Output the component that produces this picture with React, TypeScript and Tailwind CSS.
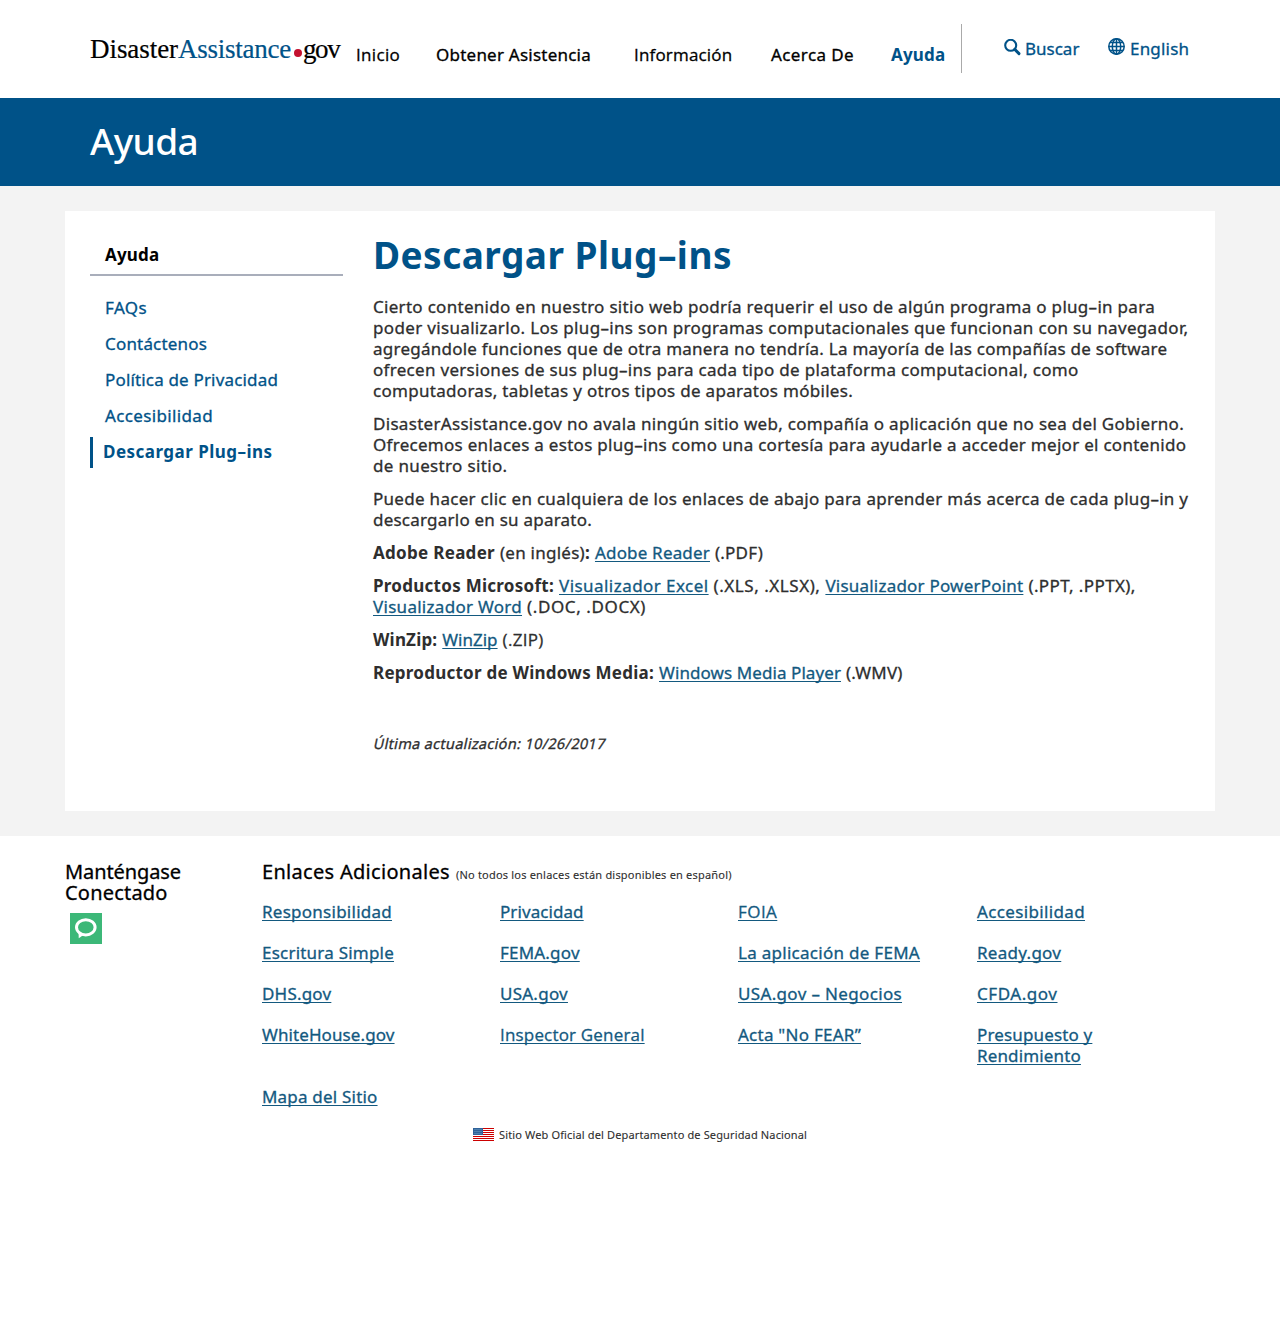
import React from 'react';

const nav = [
  { label: 'Inicio', cls: "w-[80px] font-['Open_Sans',sans-serif] tracking-[0.32px]" },
  { label: 'Obtener Asistencia', cls: 'w-[198px] tracking-[0.231px]' },
  { label: 'Información', cls: "w-[137px] font-['Open_Sans',sans-serif] tracking-[0.18px]" },
  { label: 'Acerca De', cls: 'w-[120px] tracking-[0.399px]' },
  { label: 'Ayuda', cls: 'w-[70px] font-bold tracking-[0.2px] text-[#005288] [-webkit-text-stroke:0]' },
];

const sideLinks = [
  { label: 'FAQs', cls: 'tracking-[0.394px]' },
  { label: 'Contáctenos', cls: 'tracking-[0.179px]' },
  { label: 'Política de Privacidad', cls: 'tracking-[0.168px]' },
  { label: 'Accesibilidad', cls: 'tracking-[0.357px]' },
];

const paragraphs = [
  [
    { text: 'Cierto contenido en nuestro sitio web podría requerir el uso de algún programa o plug–in para', cls: 'tracking-[0.297px]' },
    { text: 'poder visualizarlo. Los plug–ins son programas computacionales que funcionan con su navegador,', cls: 'tracking-[0.338px]' },
    { text: 'agregándole funciones que de otra manera no tendría. La mayoría de las compañías de software', cls: 'tracking-[0.247px]' },
    { text: 'ofrecen versiones de sus plug–ins para cada tipo de plataforma computacional, como', cls: 'tracking-[0.3px]' },
    { text: 'computadoras, tabletas y otros tipos de aparatos móbiles.', cls: 'tracking-[0.296px]' },
  ],
  [
    { text: 'DisasterAssistance.gov no avala ningún sitio web, compañía o aplicación que no sea del Gobierno.', cls: 'tracking-[0.303px]' },
    { text: 'Ofrecemos enlaces a estos plug–ins como una cortesía para ayudarle a acceder mejor el contenido', cls: 'tracking-[0.284px]' },
    { text: 'de nuestro sitio.', cls: 'tracking-[0.34px]' },
  ],
  [
    { text: 'Puede hacer clic en cualquiera de los enlaces de abajo para aprender más acerca de cada plug–in y', cls: 'tracking-[0.29px]' },
    { text: 'descargarlo en su aparato.', cls: 'tracking-[0.225px]' },
  ],
];

const footerLinks = [
  { label: 'Responsibilidad', cls: 'tracking-[0.257px]' },
  { label: 'Privacidad', cls: 'tracking-[0.08px]' },
  { label: 'FOIA', cls: "font-['Open_Sans',sans-serif] tracking-[0.45px]" },
  { label: 'Accesibilidad', cls: 'tracking-[0.357px]' },
  { label: 'Escritura Simple', cls: 'tracking-[0.22px]' },
  { label: 'FEMA.gov', cls: 'tracking-[0.2px]' },
  { label: 'La aplicación de FEMA', cls: 'tracking-[0.281px]' },
  { label: 'Ready.gov', cls: 'tracking-[0.28px]' },
  { label: 'DHS.gov', cls: 'tracking-[0.2px]' },
  { label: 'USA.gov', cls: 'tracking-[0.25px]' },
  { label: 'USA.gov – Negocios', cls: 'tracking-[0.346px]' },
  { label: 'CFDA.gov', cls: 'tracking-[0.55px]' },
  { label: 'WhiteHouse.gov', cls: 'tracking-[0.1px]' },
  { label: 'Inspector General', cls: "font-['Open_Sans',sans-serif] tracking-[0.18px]" },
  { label: 'Acta "No FEAR”', cls: 'tracking-[0.251px]' },
  { label: 'Presupuesto y Rendimiento', cls: 'tracking-[0.15px]' },
  { label: 'Mapa del Sitio', cls: 'tracking-[0.2px]' },
];

function A({ children, className = '' }: { children: React.ReactNode; className?: string }) {
  return (
    <a
      href="#"
      className={'text-[#13597f] underline decoration-1 underline-offset-[2px] [text-decoration-skip-ink:none] ' + className}
    >
      {children}
    </a>
  );
}

function B({ children, className = '' }: { children: React.ReactNode; className?: string }) {
  return <strong className={'font-bold [-webkit-text-stroke:0] ' + className}>{children}</strong>;
}

function SearchIcon() {
  return (
    <svg width="17" height="17" viewBox="0 0 17 17" fill="none" stroke="#005288">
      <circle cx="6.7" cy="6.3" r="5.5" strokeWidth="2.1" />
      <path d="M10.8 10.4L15 14.6" strokeWidth="2.9" strokeLinecap="round" />
    </svg>
  );
}

function GlobeIcon() {
  return (
    <svg width="17" height="17" viewBox="0 0 17 17" fill="none" stroke="#005288" strokeWidth="1.5">
      <circle cx="8.5" cy="8.5" r="7.7" />
      <ellipse cx="8.5" cy="8.5" rx="4.2" ry="7.7" />
      <path d="M8.5 0.7V16.3M0.7 8.5H16.3M2 4.6H15M2 12.4H15" />
    </svg>
  );
}

function ChatIcon() {
  return (
    <svg width="32" height="31" viewBox="0 0 32 31">
      <rect width="32" height="31" fill="#3cb878" />
      <path d="M8.4 18.5L8.8 25.3L14 21.5Z" fill="#fff" />
      <ellipse cx="15.8" cy="14.3" rx="9.3" ry="7.6" fill="#3cb878" stroke="#fff" strokeWidth="3" />
    </svg>
  );
}

function Flag() {
  return (
    <svg width="21" height="13" viewBox="0 0 21 13" shapeRendering="crispEdges">
      <rect width="21" height="13" fill="#ffffff" />
      {[0, 2, 4, 6, 8, 10, 12].map((y) => (
        <rect key={y} x="0" y={y} width="21" height="1" fill="#cc0000" />
      ))}
      <rect width="10" height="7" fill="#2f6299" />
      {[1, 3, 5].map((y) => (
        <rect key={y} x="1" y={y} width="8" height="1" fill="#4c7fae" />
      ))}
    </svg>
  );
}

export default function App() {
  return (
    <div className="min-h-[1329px] w-[1280px] bg-white font-['Noto_Sans',sans-serif] text-[17px] leading-[21px] whitespace-nowrap text-[#2e2e2e] [-webkit-text-stroke:0.3px]">
      <header className="flex h-[98px] pl-[90px]">
        <div className="flex w-[266px] pt-[33px] font-['Liberation_Serif',serif] text-[27px] leading-[32px] text-black [-webkit-text-stroke:0.2px]">
          <span className="w-[88px] tracking-[-0.06px]">Disaster</span>
          <span className="w-[115px] tracking-[-0.25px] text-[#005288]">Assistance</span>
          <span className="mt-[16px] mr-px ml-px size-[8px] rounded-full bg-[#c41230]" />
          <span className="tracking-[-1.4px]">gov</span>
        </div>
        <nav className="flex pt-[44px] text-black">
          {nav.map((n) => (
            <a key={n.label} href="#" className={n.cls}>{n.label}</a>
          ))}
        </nav>
        <div className="mt-[24px] h-[49px] w-px bg-[#aaaaaa]" />
        <a href="#" className="ml-[42px] flex pt-[38px] text-[#005288]">
          <span className="mt-[1px] w-[21px]"><SearchIcon /></span>
          <span className="w-[83px]">Buscar</span>
        </a>
        <a href="#" className="flex pt-[38px] text-[#005288]">
          <span className="w-[22px]"><GlobeIcon /></span>
          <span className="tracking-[0.2px]">English</span>
        </a>
      </header>

      <div className="h-[88px] bg-[#005288] pt-[19px] pl-[90px] text-[37px] leading-[48px] font-medium tracking-[-0.6px] text-white [-webkit-text-stroke:0]">
        Ayuda
      </div>

      <main className="h-[650px] bg-[#f3f3f3] px-[65px] py-[25px]">
        <div className="flex h-[600px] bg-white pl-[25px]">
          <aside className="w-[253px] pt-[33px]">
            <h2 className="h-[32px] border-b-2 border-[#a9aebb] pl-[15px] font-bold tracking-[0.2px] text-black [-webkit-text-stroke:0]">Ayuda</h2>
            <ul className="flex flex-col gap-[15px] pt-[21px] pl-[15px] text-[#005288]">
              {sideLinks.map((s) => (
                <li key={s.label}><a href="#" className={s.cls}>{s.label}</a></li>
              ))}
            </ul>
            <div className="mt-[11px] h-[31px] border-l-[3px] border-[#005288] pt-[4px] pl-[10px] font-bold tracking-[0.47px] text-[#005288] [-webkit-text-stroke:0]">
              Descargar Plug–ins
            </div>
          </aside>
          <article className="pt-[20px] pl-[30px]">
            <h1 className="h-[65px] text-[37px] leading-[48px] font-bold tracking-[0.47px] text-[#005288] [-webkit-text-stroke:0]">Descargar Plug–ins</h1>
            <div className="flex flex-col gap-3">
              {paragraphs.map((p, i) => (
                <p key={i}>
                  {p.map((l) => (
                    <span key={l.text} className={'block ' + l.cls}>{l.text}</span>
                  ))}
                </p>
              ))}
              <p className="flex gap-[5px]">
                <B className="tracking-[0.298px]">Adobe Reader</B>
                <span className="tracking-[0.25px]">(en inglés)<B>:</B></span>
                <A className="tracking-[0.181px]">Adobe Reader</A>
                <span className="tracking-[0.231px]">(.PDF)</span>
              </p>
              <div>
                <p className="flex gap-[5px]">
                  <B className="tracking-[0.269px]">Productos Microsoft:</B>
                  <A className="tracking-[0.45px]">Visualizador Excel</A>
                  <span className="tracking-[0.54px]">(.XLS, .XLSX),</span>
                  <A className="tracking-[0.215px]">Visualizador PowerPoint</A>
                  <span className="tracking-[0.4px]">(.PPT, .PPTX),</span>
                </p>
                <p className="flex gap-[5px]">
                  <A className="tracking-[0.286px]">Visualizador Word</A>
                  <span className="tracking-[0.607px]">(.DOC, .DOCX)</span>
                </p>
              </div>
              <p className="flex gap-[5px]">
                <B className="tracking-[0.18px]">WinZip:</B>
                <A>WinZip</A>
                <span className="font-['Open_Sans',sans-serif] tracking-[0.3px]">(.ZIP)</span>
              </p>
              <p className="flex gap-[5px]">
                <B className="tracking-[0.245px]">Reproductor de Windows Media:</B>
                <A className="tracking-[0.084px]">Windows Media Player</A>
                <span className="tracking-[0.25px]">(.WMV)</span>
              </p>
            </div>
            <p className="mt-[50px] ml-px inline-block -skew-x-12 text-[14.5px] tracking-[0.317px]">Última actualización: 10/26/2017</p>
          </article>
        </div>
      </main>

      <footer className="pt-[25px] pl-[65px]">
        <div className="flex">
          <div className="w-[197px] text-[20px] text-black">
            <h3>
              <span className="block tracking-[-0.1px]">Manténgase</span>
              <span className="block tracking-[0.2px]">Conectado</span>
            </h3>
            <div className="mt-[10px] ml-[5px]"><ChatIcon /></div>
          </div>
          <div>
            <h3 className="flex h-[21px] items-baseline gap-[6px] text-[20px] tracking-[0.3px] text-black">
              Enlaces Adicionales
              <small className="text-[11px] leading-none tracking-[0.2px] text-[#2e2e2e] [-webkit-text-stroke:0.1px]">(No todos los enlaces están disponibles en español)</small>
            </h3>
            <ul className="mt-[19px] grid grid-cols-[238px_238px_239px_200px] gap-y-5">
              {footerLinks.map((f) => (
                <li key={f.label} className={f.label.startsWith('Presupuesto') ? 'w-[130px] whitespace-normal' : ''}>
                  <A className={f.cls}>{f.label}</A>
                </li>
              ))}
            </ul>
          </div>
        </div>
        <div className="mt-[17px] ml-[408px] flex h-[21px] items-center gap-[5px] text-[11px] tracking-[0.14px] [-webkit-text-stroke:0.1px]">
          <Flag />
          Sitio Web Oficial del Departamento de Seguridad Nacional
        </div>
      </footer>
    </div>
  );
}
